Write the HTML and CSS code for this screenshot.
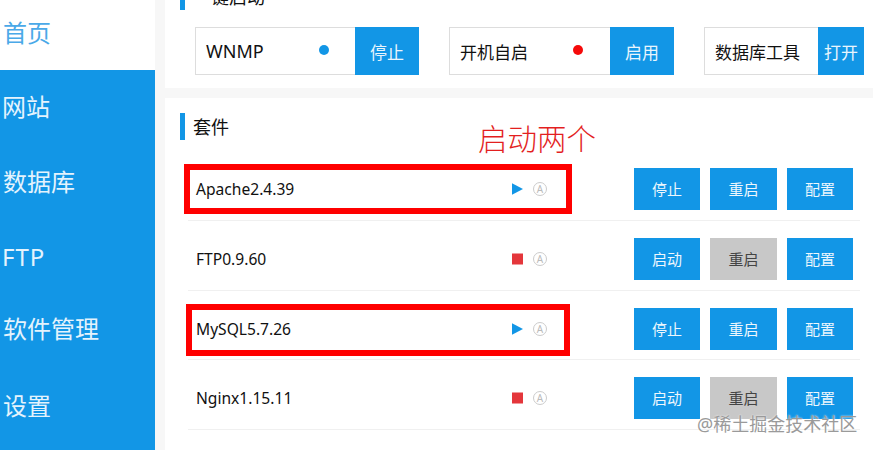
FILE: index.html
```html
<!DOCTYPE html>
<html lang="zh-CN">

<head>
  <meta charset="UTF-8">
  <title>phpStudy 首页</title>
  <link rel="stylesheet" href="styles.css">
</head>

<body>
  <div class="page">

    <ul class="nav">
      <li class="nav-home">首页</li>
      <li class="nav-site">网站</li>
      <li class="nav-db">数据库</li>
      <li class="nav-ftp">FTP</li>
      <li class="nav-soft">软件管理</li>
      <li class="nav-set">设置</li>
    </ul>

    <div class="main">
      <section class="panel panel-start">
        <h2 class="title">一键启动</h2>
        <div class="quick">
          <div class="pill pill-wnmp">
            <span class="pill-box"><b class="pill-name pill-latin">WNMP</b><i class="dot dot-on"></i></span>
            <button class="pill-btn">停止</button>
          </div>
          <div class="pill pill-auto">
            <span class="pill-box"><b class="pill-name">开机自启</b><i class="dot dot-off"></i></span>
            <button class="pill-btn">启用</button>
          </div>
          <div class="pill pill-tool">
            <span class="pill-box"><b class="pill-name">数据库工具</b></span>
            <button class="pill-btn">打开</button>
          </div>
        </div>
      </section>

      <section class="panel panel-suite">
        <h2 class="title">套件</h2>
        <div class="rows">
          <div class="row">
            <span class="row-name">Apache2.4.39</span>
            <span class="row-state">
              <svg class="state-icon" viewBox="0 0 11 12"><path d="M0 0.3 L11 6 L0 11.7 Z" fill="#1296e6"/></svg>
              <span class="auto-mark">A</span>
            </span>
            <span class="row-btns">
              <button class="btn">停止</button><button class="btn">重启</button><button class="btn">配置</button>
            </span>
          </div>
          <div class="row">
            <span class="row-name">FTP0.9.60</span>
            <span class="row-state">
              <svg class="state-icon" viewBox="0 0 11 12"><rect x="0" y="0.5" width="11" height="11" fill="#e4363b"/></svg>
              <span class="auto-mark">A</span>
            </span>
            <span class="row-btns">
              <button class="btn">启动</button><button class="btn btn-off">重启</button><button class="btn">配置</button>
            </span>
          </div>
          <div class="row">
            <span class="row-name">MySQL5.7.26</span>
            <span class="row-state">
              <svg class="state-icon" viewBox="0 0 11 12"><path d="M0 0.3 L11 6 L0 11.7 Z" fill="#1296e6"/></svg>
              <span class="auto-mark">A</span>
            </span>
            <span class="row-btns">
              <button class="btn">停止</button><button class="btn">重启</button><button class="btn">配置</button>
            </span>
          </div>
          <div class="row">
            <span class="row-name">Nginx1.15.11</span>
            <span class="row-state">
              <svg class="state-icon" viewBox="0 0 11 12"><rect x="0" y="0.5" width="11" height="11" fill="#e4363b"/></svg>
              <span class="auto-mark">A</span>
            </span>
            <span class="row-btns">
              <button class="btn">启动</button><button class="btn btn-off">重启</button><button class="btn">配置</button>
            </span>
          </div>
        </div>
      </section>
    </div>

    <!-- annotations drawn over the screenshot -->
    <div class="mark mark-apache"></div>
    <div class="mark mark-mysql"></div>
    <div class="note">启动两个</div>
    <div class="watermark">@稀土掘金技术社区</div>

  </div>
</body>
</html>
```

FILE: styles.css
```css
* {
  box-sizing: border-box;
}
body {
  margin: 0;
  font-family: "Noto Sans", "Noto Sans CJK SC", sans-serif;
  color: #111;
  background: #f7f7f7;
}
.page {
  position: relative;
  display: flex;
  width: 873px;
  height: 450px;
  overflow: hidden;
}

/* sidebar */
.nav {
  flex: none;
  width: 155px;
  height: 450px;
  margin: 0;
  padding: 0;
  list-style: none;
  background: #1296e6;
  color: #e4f3fd;
  font-size: 24px;
}
.nav li {
  display: flex;
  align-items: center;
  padding: 0 0 4px 3px;
}
.nav .nav-home {
  height: 70px;
  padding-bottom: 8px;
  background: #fff;
  color: #4aa9e8;
}
.nav .nav-site { height: 76px; padding: 0 0 6px 2px; }
.nav-db { height: 72px; }
.nav .nav-ftp { height: 80px; padding-left: 2px; letter-spacing: 1px; }
.nav-soft { height: 62px; }
.nav .nav-set { height: 94px; padding-bottom: 6px; }

/* panels */
.main {
  flex: none;
  width: 708px;
  margin-left: 10px;
}
.panel {
  background: #fff;
}
.panel-start {
  height: 120px;
  margin-top: -32px;
  padding-top: 15px;
}
.panel-suite {
  height: 400px;
  margin-top: 10px;
  padding-top: 15px;
}
.title {
  height: 27px;
  margin: 0 0 0 15px;
  padding-left: 8px;
  border-left: 5px solid #1296e6;
  font-size: 18px;
  font-weight: 400;
  line-height: 29px;
}

/* quick start boxes */
.quick {
  display: flex;
  margin: 17px 0 0 30px;
}
.pill {
  display: flex;
  height: 48px;
}
.pill-wnmp { width: 224px; margin-right: 30px; }
.pill-auto { width: 225px; margin-right: 30px; }
.pill-tool { width: 160px; }
.pill-box {
  flex: 1;
  display: flex;
  align-items: center;
  justify-content: space-between;
  padding: 0 26px 0 10px;
  border: 1px solid #ddd;
  border-right: none;
}
.pill-auto .pill-box {
  padding-right: 27px;
}
.pill-name {
  font-size: 17px;
  font-weight: 400;
}
.pill-latin {
  font-size: 18px;
}
.pill-tool .pill-box {
  padding-right: 0;
}
.pill-btn {
  flex: none;
  width: 64px;
  border: none;
  background: #1296e6;
  color: #e9f5fd;
  font-family: inherit;
  font-size: 17px;
  padding: 0;
}
.pill-tool .pill-btn {
  width: 46px;
}
.dot {
  width: 10px;
  height: 10px;
  margin-top: -2px;
  border-radius: 50%;
}
.dot-on { background: #1296e6; }
.dot-off { background: #f50a0a; }

/* service rows */
.rows {
  margin: 11.3px 13px 0 23px;
}
.row {
  display: grid;
  grid-template-columns: 316px 122px auto;
  height: 69.67px;
  padding: 17px 0 0 8px;
  border-bottom: 1px solid #f0f0f0;
}
.row-name {
  height: 42px;
  font-size: 15.6px;
  line-height: 42px;
}
.row-state {
  display: flex;
  align-items: center;
  height: 42px;
  gap: 10px;
}
.state-icon {
  width: 11px;
  height: 12px;
}
.auto-mark {
  width: 14px;
  height: 14px;
  border: 1px solid #ccc;
  border-radius: 50%;
  color: #bbb;
  font-size: 10px;
  line-height: 12px;
  text-align: center;
}
.row-btns {
  display: flex;
  gap: 10px;
}
.btn {
  width: 66px;
  height: 42px;
  padding: 0 0 1px;
  border: none;
  background: #1296e6;
  color: #eef7fd;
  font-family: inherit;
  font-size: 15px;
}
.btn:nth-child(2) {
  width: 67px;
}
.btn-off {
  background: #c8c8c8;
  color: #444;
}

/* annotations */
.mark {
  position: absolute;
  height: 50px;
  border: 6px solid #ff0000;
}
.mark-apache {
  left: 184px;
  top: 164px;
  width: 388px;
}
.mark-mysql {
  left: 186px;
  top: 304px;
  width: 384px;
  height: 52px;
}
.note {
  position: absolute;
  left: 478px;
  top: 118px;
  color: #e31f1f;
  font-size: 29.5px;
  font-weight: 300;
  line-height: 42px;
}
.watermark {
  position: absolute;
  left: 697px;
  top: 412px;
  color: #9a9a9a;
  font-size: 18px;
  line-height: 24px;
  white-space: nowrap;
  text-shadow: 0 0 2px #fff;
}
```
